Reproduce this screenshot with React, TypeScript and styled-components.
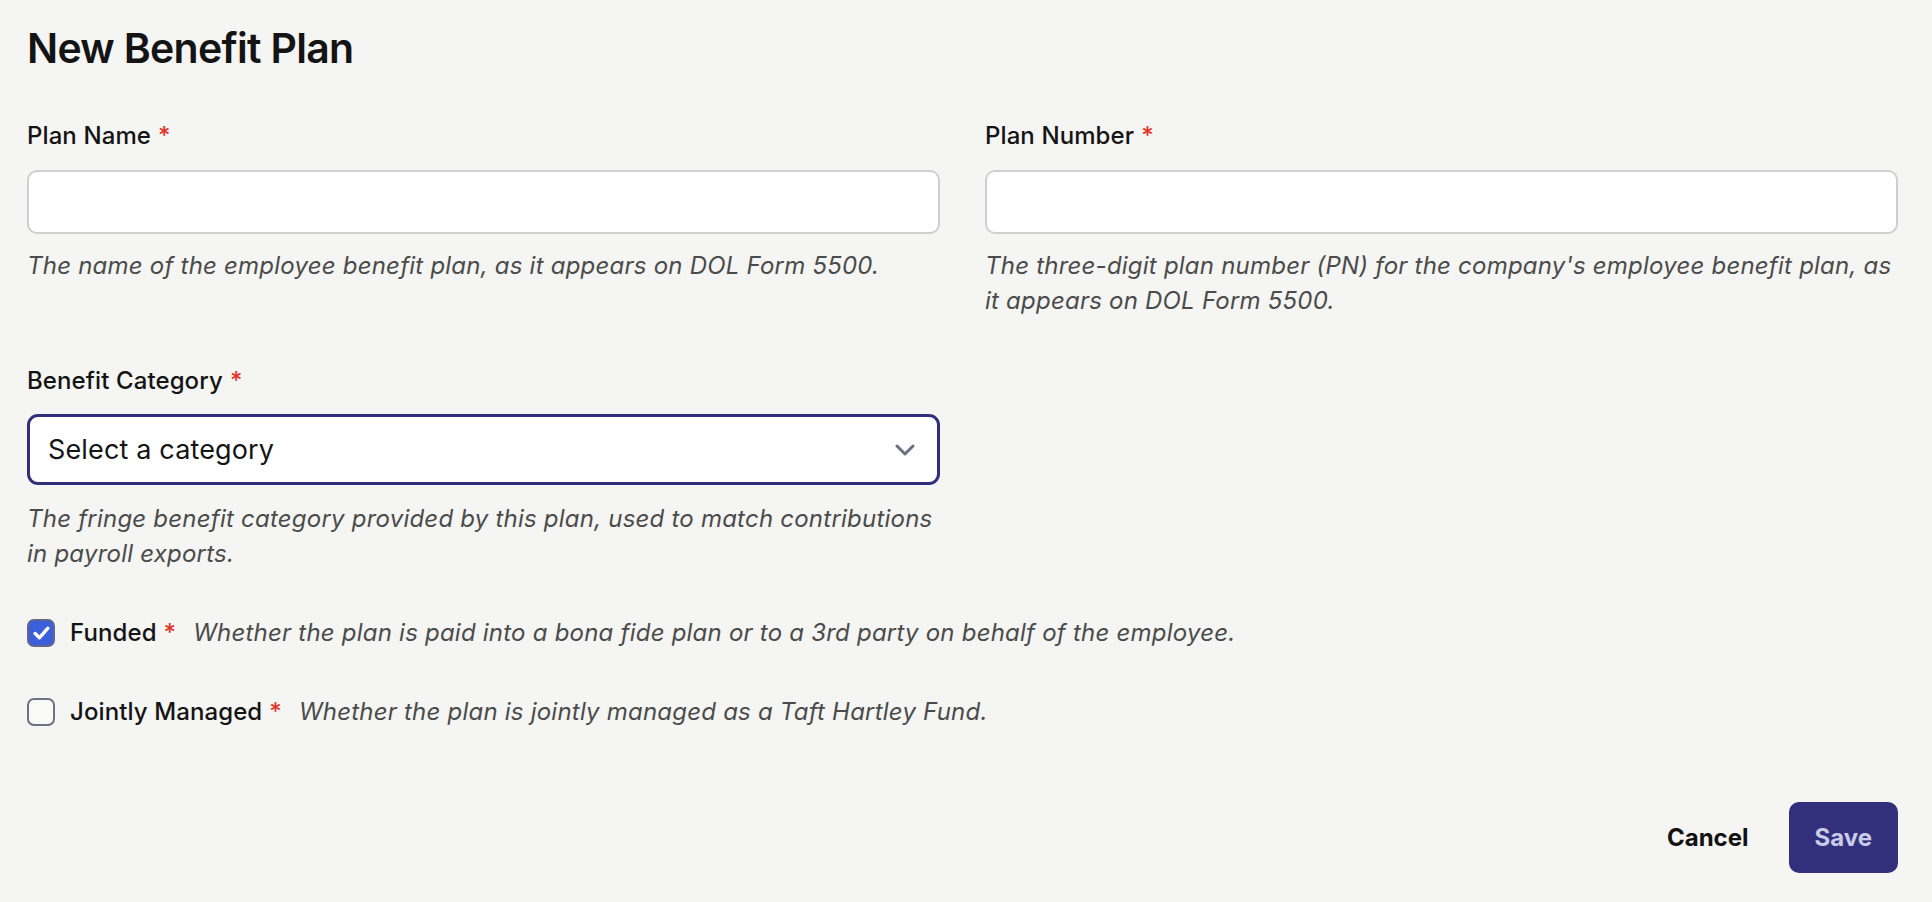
import React, { useState } from "react";
import styled, { createGlobalStyle } from "styled-components";

const GlobalStyle = createGlobalStyle`
  html, body {
    margin: 0;
    padding: 0;
    background: #f5f5f3;
  }
  body {
    font-family: Inter, "Noto Sans", "Liberation Sans", sans-serif;
    color: #151515;
  }
  * {
    box-sizing: border-box;
  }
`;

const Page = styled.div`
  padding: 24px 34px 0 27px;
  min-height: 902px;
`;

const Title = styled.h1`
  margin: 0;
  font-size: 41px;
  line-height: 49px;
  font-weight: 600;
  letter-spacing: -0.7px;
  color: #141414;
`;

const Form = styled.form`
  margin-top: 45px;
  display: flex;
  flex-direction: column;
`;

const FieldGrid = styled.div`
  display: grid;
  grid-template-columns: 1fr 1fr;
  column-gap: 45px;
  row-gap: 45px;
`;

const Field = styled.div`
  display: flex;
  flex-direction: column;
`;

const Label = styled.label`
  font-size: 24px;
  line-height: 36px;
  font-weight: 500;
  letter-spacing: 0.1px;
  color: #141414;
`;

const Required = styled.span`
  color: #e3342a;
  margin-left: 7px;
`;

const TextInput = styled.input`
  margin-top: 16px;
  height: 64px;
  width: 100%;
  border: 2px solid #cfcfcf;
  border-radius: 10px;
  background: #fff;
  padding: 0 18px;
  font-family: inherit;
  font-size: 27px;
  outline: none;
`;

const SelectWrap = styled.div`
  position: relative;
  margin-top: 15px;
`;

const Select = styled.select`
  appearance: none;
  width: 100%;
  height: 71px;
  border: 3px solid #312e7b;
  border-radius: 11px;
  background: #fff;
  padding: 0 60px 0 18px;
  font-family: inherit;
  font-size: 27px;
  letter-spacing: 0.15px;
  color: #151515;
  outline: none;
`;

const Chevron = styled.svg`
  position: absolute;
  right: 25px;
  top: 50%;
  transform: translateY(-50%);
  pointer-events: none;
`;

const Help = styled.p<{ $gap?: number }>`
  margin: ${(p) => p.$gap ?? 14}px 0 0;
  font-size: 24px;
  line-height: 35px;
  font-style: italic;
  color: #4b4b4b;
  letter-spacing: 0.22px;
`;

const CheckRow = styled.label<{ $gap: number }>`
  margin-top: ${(p) => p.$gap}px;
  display: flex;
  align-items: center;
  height: 36px;
  cursor: pointer;
`;

const Box = styled.span<{ $checked: boolean }>`
  width: 28px;
  height: 28px;
  flex: none;
  border-radius: 7px;
  border: 2px solid ${(p) => (p.$checked ? "#61668a" : "#707180")};
  background: ${(p) => (p.$checked ? "#3b5fdc" : "#f9f9f8")};
  display: flex;
  align-items: center;
  justify-content: center;
  margin-right: 15px;
`;

const CheckLabel = styled.span`
  font-size: 24px;
  line-height: 36px;
  font-weight: 500;
  letter-spacing: 0.1px;
  color: #141414;
  white-space: nowrap;
`;

const CheckHelp = styled.span`
  margin-left: 17px;
  font-size: 24px;
  line-height: 36px;
  font-style: italic;
  color: #4b4b4b;
  letter-spacing: 0.22px;
  white-space: nowrap;
`;

const Actions = styled.div`
  margin-top: 72px;
  display: flex;
  justify-content: flex-end;
  align-items: center;
  gap: 14px;
`;

const Button = styled.button<{ $primary?: boolean }>`
  height: 71px;
  padding: 0 26px;
  border: none;
  border-radius: 10px;
  font-family: inherit;
  font-size: 24px;
  font-weight: 700;
  cursor: pointer;
  background: ${(p) => (p.$primary ? "#322f7b" : "transparent")};
  color: ${(p) => (p.$primary ? "#c9cbe9" : "#121212")};
`;

function Checkbox({
  checked,
  label,
  help,
  gap,
  onToggle
}: {
  checked: boolean;
  label: string;
  help: string;
  gap: number;
  onToggle(): void;
}) {
  return (
    <CheckRow $gap={gap} onClick={onToggle}>
      <Box $checked={checked}>
        {checked && (
          <svg width="17" height="14" viewBox="0 0 16 13">
            <path
              d="M2 7l4 4 8-9"
              fill="none"
              stroke="#fff"
              strokeWidth="3.2"
              strokeLinecap="round"
              strokeLinejoin="round"
            />
          </svg>
        )}
      </Box>
      <CheckLabel>
        {label}
        <Required>*</Required>
      </CheckLabel>
      <CheckHelp>{help}</CheckHelp>
    </CheckRow>
  );
}

export default function App() {
  const [funded, setFunded] = useState(true);
  const [joint, setJoint] = useState(false);

  return (
    <Page>
      <GlobalStyle />
      <Title>New Benefit Plan</Title>
      <Form onSubmit={(e) => e.preventDefault()}>
        <FieldGrid>
          <Field>
            <Label>
              Plan Name<Required>*</Required>
            </Label>
            <TextInput type="text" />
            <Help>
              The name of the employee benefit plan, as it appears on DOL Form
              5500.
            </Help>
          </Field>
          <Field>
            <Label>
              Plan Number<Required>*</Required>
            </Label>
            <TextInput type="text" />
            <Help>
              The three-digit plan number (PN) for the company's employee
              benefit plan, as it appears on DOL Form 5500.
            </Help>
          </Field>
          <Field>
            <Label>
              Benefit Category<Required>*</Required>
            </Label>
            <SelectWrap>
              <Select defaultValue="">
                <option value="">Select a category</option>
              </Select>
              <Chevron width="20" height="12" viewBox="0 0 20 12">
                <path
                  d="M2 2l8 8 8-8"
                  fill="none"
                  stroke="#6b7080"
                  strokeWidth="3"
                  strokeLinecap="round"
                  strokeLinejoin="round"
                />
              </Chevron>
            </SelectWrap>
            <Help $gap={16}>
              The fringe benefit category provided by this plan, used to match
              contributions in payroll exports.
            </Help>
          </Field>
        </FieldGrid>
        <Checkbox
          gap={44}
          checked={funded}
          onToggle={() => setFunded(!funded)}
          label="Funded"
          help="Whether the plan is paid into a bona fide plan or to a 3rd party on behalf of the employee."
        />
        <Checkbox
          gap={43}
          checked={joint}
          onToggle={() => setJoint(!joint)}
          label="Jointly Managed"
          help="Whether the plan is jointly managed as a Taft Hartley Fund."
        />
        <Actions>
          <Button type="button">Cancel</Button>
          <Button type="submit" $primary>
            Save
          </Button>
        </Actions>
      </Form>
    </Page>
  );
}
